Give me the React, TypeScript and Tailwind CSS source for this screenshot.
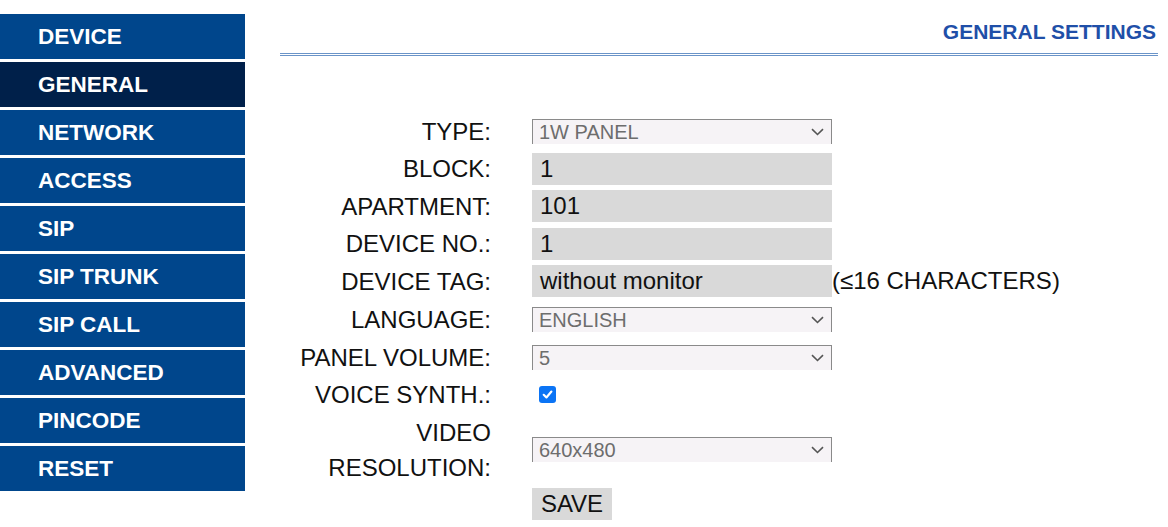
import React from 'react';

const menu = ['DEVICE', 'GENERAL', 'NETWORK', 'ACCESS', 'SIP', 'SIP TRUNK', 'SIP CALL', 'ADVANCED', 'PINCODE', 'RESET'];

function Select({ value }: { value: string }) {
  return (
    <div className="flex h-[25px] w-[300px] items-center justify-between border-x border-t border-[#8a8a8a] bg-[#f6f3f6] pl-[6px] pr-[7px] text-[20px] leading-none text-[#6d6d6d]">
      <span>{value}</span>
      <svg width="13" height="8" viewBox="0 0 13 8">
        <path d="M1 1.2 L6.5 6.5 L12 1.2" fill="none" stroke="#555" strokeWidth="1.6" />
      </svg>
    </div>
  );
}

function TextBox({ value }: { value: string }) {
  return (
    <div className="flex h-[32px] w-[300px] items-center bg-[#d9d9d9] pl-[8px] text-[24px] leading-none text-[#111]">
      {value}
    </div>
  );
}

function Row({ h, label, children }: { h: string; label: React.ReactNode; children: React.ReactNode }) {
  return (
    <div className={`flex items-center ${h}`}>
      <div className="w-[211px] text-right text-[24px] leading-[35px] text-[#111]">{label}</div>
      <div className="ml-[41px] flex items-center">{children}</div>
    </div>
  );
}

function App() {
  return (
    <div className="flex h-[527px] w-[1168px] overflow-hidden bg-white" style={{ fontFamily: '"Liberation Sans", Arial, sans-serif' }}>
      <aside className="mt-[14px] flex w-[245px] flex-col gap-[3px]">
        {menu.map((m) => (
          <div
            key={m}
            className={`flex h-[45px] items-center pl-[38px] text-[22.5px] font-bold text-white ${m === 'GENERAL' ? 'bg-[#00204a]' : 'bg-[#00468c]'}`}
          >
            {m}
          </div>
        ))}
      </aside>

      <main className="ml-[35px] mr-[10px] flex-1">
        <div className="pr-[2px] pt-[20px] text-right text-[21px] font-bold leading-[24px] text-[#1f4fa8]">GENERAL SETTINGS</div>
        <div className="mt-[9px] border-t-[3px] border-double border-[#6a94c8]" />

        <div className="mt-[56px] flex flex-col">
          <Row h="h-[38px]" label="TYPE:">
            <Select value="1W PANEL" />
          </Row>
          <Row h="h-[37px]" label="BLOCK:">
            <TextBox value="1" />
          </Row>
          <Row h="h-[38px]" label="APARTMENT:">
            <TextBox value="101" />
          </Row>
          <Row h="h-[37px]" label="DEVICE NO.:">
            <TextBox value="1" />
          </Row>
          <Row h="h-[38px]" label="DEVICE TAG:">
            <TextBox value="without monitor" />
            <span className="text-[24px] text-[#111]">(≤16 CHARACTERS)</span>
          </Row>
          <Row h="h-[39px]" label="LANGUAGE:">
            <Select value="ENGLISH" />
          </Row>
          <Row h="h-[36px]" label="PANEL VOLUME:">
            <Select value="5" />
          </Row>
          <Row h="h-[39px]" label="VOICE SYNTH.:">
            <span className="ml-[7px] flex h-[17px] w-[17px] items-center justify-center rounded-[3px] bg-[#0b74f5]">
              <svg width="13" height="13" viewBox="0 0 12 12">
                <path d="M2.5 6.3 L5 8.7 L9.6 3.3" fill="none" stroke="white" strokeWidth="2" strokeLinecap="round" strokeLinejoin="round" />
              </svg>
            </span>
          </Row>
          <Row h="h-[71px]" label={<>VIDEO<br />RESOLUTION:</>}>
            <Select value="640x480" />
          </Row>
          <Row h="h-[38px]" label="">
            <div className="flex h-[32px] w-[80px] items-center justify-center bg-[#d9d9d9] text-[24px] text-[#111]">SAVE</div>
          </Row>
        </div>
      </main>
    </div>
  );
}

export default App;
